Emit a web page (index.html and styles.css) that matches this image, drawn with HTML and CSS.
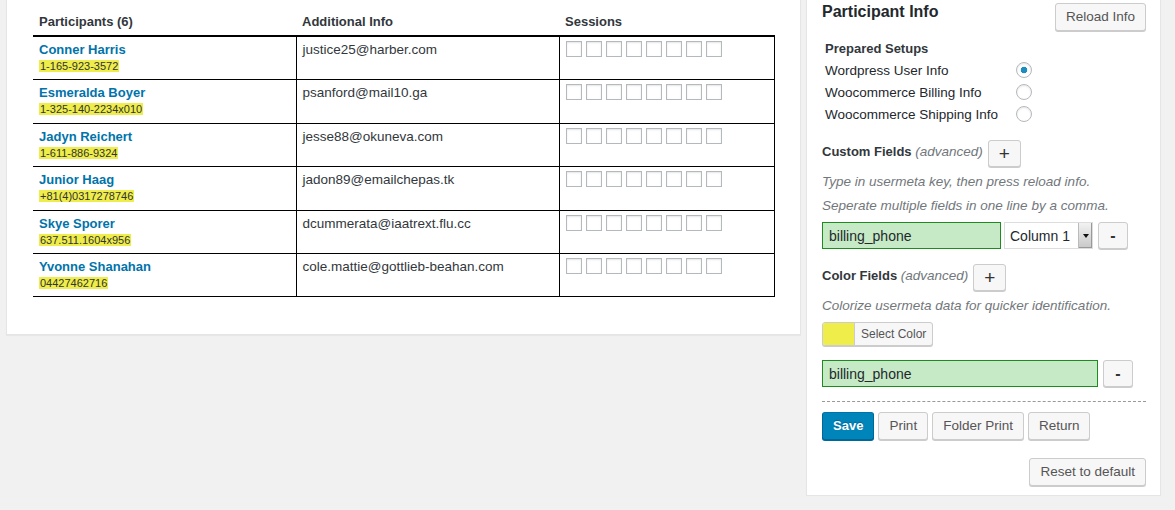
FILE: index.html
```html
<!DOCTYPE html>
<html lang="en">
<head>
  <meta charset="UTF-8">
  <title>Participants</title>
  <link rel="stylesheet" href="styles.css">
</head>
<body>
  <div class="wrap">
    <div class="card">
      <table class="participants">
        <colgroup>
          <col style="width: 263px">
          <col style="width: 263px">
          <col style="width: 215px">
        </colgroup>
        <thead>
          <tr>
            <th>Participants (6)</th>
            <th>Additional Info</th>
            <th>Sessions</th>
          </tr>
        </thead>
        <tbody>
          <tr>
            <td><a class="name" href="#">Conner Harris</a><div class="meta"><span class="phone">1-165-923-3572</span></div></td>
            <td>justice25@harber.com</td>
            <td><div class="sessions"><input type="checkbox"><input type="checkbox"><input type="checkbox"><input type="checkbox"><input type="checkbox"><input type="checkbox"><input type="checkbox"><input type="checkbox"></div></td>
          </tr>
          <tr>
            <td><a class="name" href="#">Esmeralda Boyer</a><div class="meta"><span class="phone">1-325-140-2234x010</span></div></td>
            <td>psanford@mail10.ga</td>
            <td><div class="sessions"><input type="checkbox"><input type="checkbox"><input type="checkbox"><input type="checkbox"><input type="checkbox"><input type="checkbox"><input type="checkbox"><input type="checkbox"></div></td>
          </tr>
          <tr>
            <td><a class="name" href="#">Jadyn Reichert</a><div class="meta"><span class="phone">1-611-886-9324</span></div></td>
            <td>jesse88@okuneva.com</td>
            <td><div class="sessions"><input type="checkbox"><input type="checkbox"><input type="checkbox"><input type="checkbox"><input type="checkbox"><input type="checkbox"><input type="checkbox"><input type="checkbox"></div></td>
          </tr>
          <tr>
            <td><a class="name" href="#">Junior Haag</a><div class="meta"><span class="phone">+81(4)0317278746</span></div></td>
            <td>jadon89@emailchepas.tk</td>
            <td><div class="sessions"><input type="checkbox"><input type="checkbox"><input type="checkbox"><input type="checkbox"><input type="checkbox"><input type="checkbox"><input type="checkbox"><input type="checkbox"></div></td>
          </tr>
          <tr>
            <td><a class="name" href="#">Skye Sporer</a><div class="meta"><span class="phone">637.511.1604x956</span></div></td>
            <td>dcummerata@iaatrext.flu.cc</td>
            <td><div class="sessions"><input type="checkbox"><input type="checkbox"><input type="checkbox"><input type="checkbox"><input type="checkbox"><input type="checkbox"><input type="checkbox"><input type="checkbox"></div></td>
          </tr>
          <tr>
            <td><a class="name" href="#">Yvonne Shanahan</a><div class="meta"><span class="phone">04427462716</span></div></td>
            <td>cole.mattie@gottlieb-beahan.com</td>
            <td><div class="sessions"><input type="checkbox"><input type="checkbox"><input type="checkbox"><input type="checkbox"><input type="checkbox"><input type="checkbox"><input type="checkbox"><input type="checkbox"></div></td>
          </tr>
        </tbody>
      </table>
    </div>

    <div class="panel">
      <div class="panel-head">
        <h2>Participant Info</h2>
        <button class="btn">Reload Info</button>
      </div>

      <div class="setups">
        <div class="setups-title">Prepared Setups</div>
        <label for="s1">Wordpress User Info</label><input type="radio" name="setup" id="s1" checked>
        <label for="s2">Woocommerce Billing Info</label><input type="radio" name="setup" id="s2">
        <label for="s3">Woocommerce Shipping Info</label><input type="radio" name="setup" id="s3">
      </div>

      <div class="field-head">
        <h3>Custom Fields <em>(advanced)</em></h3>
        <button class="btn btn-icon">+</button>
      </div>
      <p class="hint">Type in usermeta key, then press reload info.</p>
      <p class="hint hint-next">Seperate multiple fields in one line by a comma.</p>
      <div class="field-row">
        <input class="meta-key" type="text" value="billing_phone">
        <span class="select">
          <select><option>Column 1</option><option>Column 2</option></select>
          <span class="select-arrow"></span>
        </span>
        <button class="btn btn-minus">-</button>
      </div>

      <div class="field-head">
        <h3>Color Fields <em>(advanced)</em></h3>
        <button class="btn btn-icon">+</button>
      </div>
      <p class="hint">Colorize usermeta data for quicker identification.</p>
      <div class="color-row">
        <button class="color-pick"><span class="swatch"></span><span class="color-label">Select Color</span></button>
      </div>
      <div class="field-row field-row-wide">
        <input class="meta-key wide" type="text" value="billing_phone">
        <button class="btn btn-minus">-</button>
      </div>

      <hr class="sep">

      <div class="actions">
        <button class="btn btn-primary">Save</button>
        <button class="btn">Print</button>
        <button class="btn">Folder Print</button>
        <button class="btn">Return</button>
      </div>

      <div class="reset-row">
        <button class="btn">Reset to default</button>
      </div>
    </div>
  </div>
</body>
</html>
```

FILE: styles.css
```css
* {
  box-sizing: border-box;
}

body {
  margin: 0;
  padding: 0 0 0 6px;
  background: #f1f1f1;
  font-family: "Liberation Sans", Arial, sans-serif;
  font-size: 13.5px;
  color: #32373c;
}

.wrap {
  display: flex;
  align-items: flex-start;
  gap: 5px;
}

/* left: participant table */
.card {
  width: 795px;
  background: #fff;
  border: 1px solid #e5e5e5;
  border-top: 0;
  box-shadow: 0 1px 1px rgba(0, 0, 0, .04);
  padding: 5px 26px 37px;
}

.participants {
  width: 741px;
  border-collapse: collapse;
  table-layout: fixed;
}

.participants th {
  text-align: left;
  font-size: 13px;
  font-weight: bold;
  line-height: 17px;
  padding: 8px 6px 5px;
  border-bottom: 2px solid #000;
}

.participants td {
  vertical-align: top;
  line-height: 17px;
  padding: 4px 6px 6.4px;
  border-bottom: 1px solid #000;
  color: #32373c;
}

.participants td + td {
  border-left: 1px solid #000;
}

.participants td:last-child {
  border-right: 1px solid #000;
}

.name {
  display: block;
  color: #0073aa;
  font-size: 13px;
  font-weight: bold;
  text-decoration: none;
}

.meta {
  margin-top: 2px;
  font-size: 11px;
  line-height: 13px;
}

.phone {
  background: #eeed4a;
  color: #333;
  padding: 0 1px;
}

.sessions {
  display: flex;
  gap: 4px;
}

.sessions input {
  appearance: none;
  width: 16px;
  height: 16px;
  margin: 0;
  border: 1px solid #b4b9be;
  background: #fff;
  box-shadow: inset 0 1px 2px rgba(0, 0, 0, .1);
}

/* right: participant info box */
.panel {
  width: 355px;
  background: #fff;
  border: 1px solid #e5e5e5;
  border-top: 0;
  box-shadow: 0 1px 1px rgba(0, 0, 0, .04);
  padding: 0 14px 9px 15px;
}

.panel-head {
  display: flex;
  justify-content: space-between;
  align-items: flex-start;
}

.panel-head h2 {
  margin: 0;
  font-size: 16px;
  line-height: 24px;
  color: #23282d;
}

.panel-head .btn {
  margin-top: 3px;
}

.btn {
  height: 28px;
  padding: 0 10px;
  border: 1px solid #ccc;
  border-radius: 3px;
  background: #f7f7f7;
  box-shadow: 0 1px 0 #ccc;
  color: #555;
  font-family: inherit;
  font-size: 13.5px;
  line-height: 26px;
  cursor: pointer;
}

.btn-primary {
  background: #0085ba;
  border-color: #0073aa #006799 #006799;
  box-shadow: 0 1px 0 #006799;
  color: #fff;
  font-size: 13px;
  font-weight: bold;
  text-shadow: 0 -1px 1px #006799;
}

.btn-icon {
  width: 33px;
  height: 27px;
  padding: 0;
  font-size: 19px;
  color: #333;
}

.btn-minus {
  width: 30px;
  height: 27px;
  padding: 0;
  margin-left: 5px;
  font-size: 16px;
  font-weight: bold;
  color: #333;
}

.setups {
  display: grid;
  grid-template-columns: 191px 16px;
  grid-auto-rows: 22px;
  align-items: center;
  margin: 6px 0 0 3px;
  color: #23282d;
}

.setups-title {
  grid-column: 1 / 3;
  font-size: 13px;
  font-weight: bold;
  color: #32373c;
}

.setups input {
  appearance: none;
  width: 16px;
  height: 16px;
  margin: 0;
  border: 1px solid #b4b9be;
  border-radius: 50%;
  background: #fff;
  box-shadow: inset 0 1px 2px rgba(0, 0, 0, .1);
}

.setups input:checked {
  background: radial-gradient(circle, #1e8cbe 0 3px, #fff 3.6px);
}

.field-head {
  display: flex;
  align-items: flex-start;
  gap: 5px;
  margin-top: 15px;
}

.field-head h3 {
  margin: 0;
  font-size: 13px;
  line-height: 24px;
}

.field-head em {
  font-size: 13.5px;
  font-weight: normal;
  color: #72777c;
}

.hint {
  margin: 3px 0 0;
  font-style: italic;
  line-height: 24px;
  color: #72777c;
}

.hint-next {
  margin-top: 0;
}

.field-row {
  display: flex;
  align-items: center;
  margin-top: 4px;
}

.field-row-wide {
  margin-top: 12px;
}

.meta-key {
  width: 179px;
  height: 27px;
  padding: 0 6px;
  border: 1px solid #1f8a1f;
  background: #c6eac6;
  font-family: inherit;
  font-size: 14px;
  color: #23282d;
}

.meta-key.wide {
  width: 276px;
}

.select {
  position: relative;
  display: inline-block;
  margin-left: 3px;
}

.select select {
  appearance: none;
  display: block;
  width: 89px;
  height: 27px;
  padding: 0 18px 0 5px;
  border: 1px solid #ddd;
  border-radius: 0;
  background: #fff;
  font-family: inherit;
  font-size: 14px;
  color: #23282d;
}

/* little dropdown button drawn over the select's right edge */
.select-arrow {
  position: absolute;
  top: 1px;
  right: 1px;
  bottom: 1px;
  width: 14px;
  border-left: 1px solid #bbb;
  background: linear-gradient(#f2f2f2, #c8c8c8);
  box-shadow: inset -1px -1px 0 #999;
  pointer-events: none;
}

.select-arrow::after {
  content: "";
  position: absolute;
  left: 4px;
  top: 11px;
  border-left: 3px solid transparent;
  border-right: 3px solid transparent;
  border-top: 4px solid #111;
}

.color-row {
  margin-top: 4px;
}

.color-pick {
  display: inline-flex;
  height: 24px;
  padding: 0;
  border: 1px solid #ccc;
  border-radius: 3px;
  background: #f7f7f7;
  box-shadow: 0 1px 0 #ccc;
  overflow: hidden;
  cursor: pointer;
}

.swatch {
  width: 32px;
  background: #eeed4a;
  border-right: 1px solid #ccc;
}

.color-label {
  padding: 0 6px;
  font-family: "Liberation Sans", Arial, sans-serif;
  font-size: 12px;
  line-height: 22px;
  color: #555;
}

.sep {
  border: 0;
  border-top: 1px dashed #999;
  margin: 14px 0 0;
}

.actions {
  display: flex;
  gap: 4px;
  margin-top: 10px;
}

.reset-row {
  display: flex;
  justify-content: flex-end;
  margin-top: 18px;
}
```
